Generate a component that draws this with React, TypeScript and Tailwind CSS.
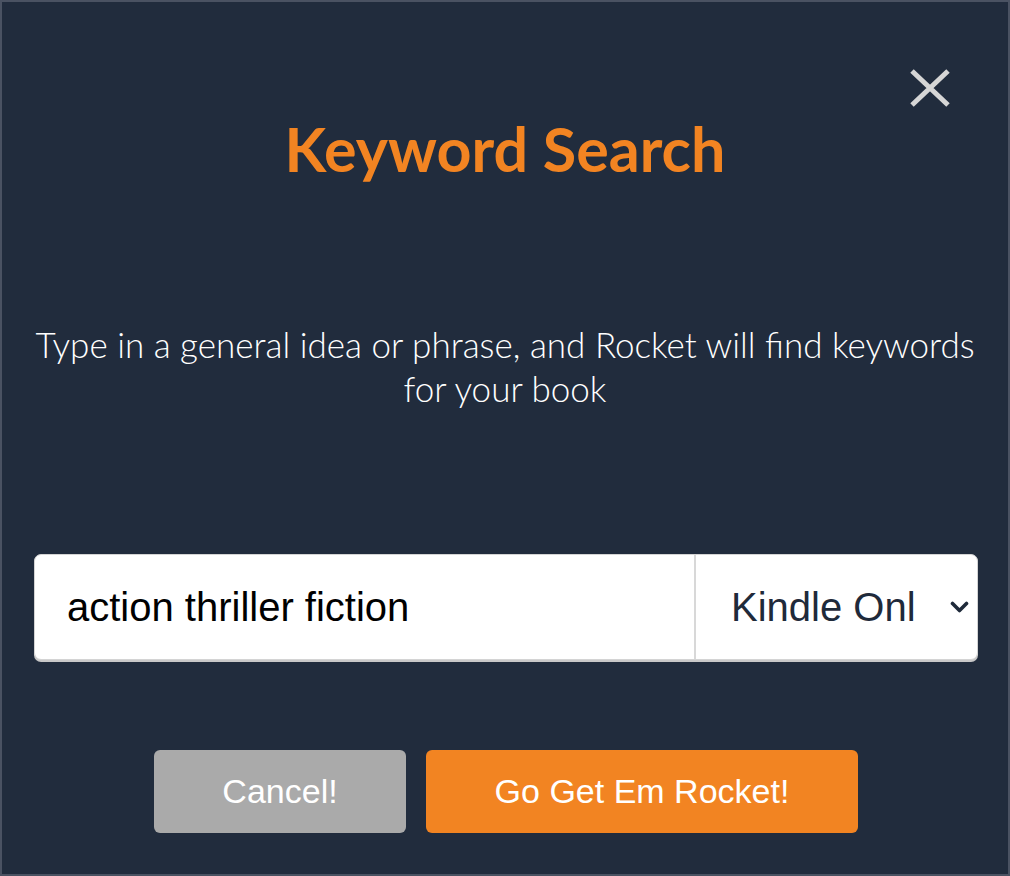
import React from "react";

export default function App() {
  return (
    <div className="w-[1010px] h-[876px] border-2 border-[#4a5262] bg-[#212c3d] relative flex flex-col items-center">
      <button className="absolute top-[64px] right-[56px] w-[44px] h-[44px] flex items-center justify-center" aria-label="Close">
        <svg width="42" height="38" viewBox="0 0 42 38">
          <path d="M3 2 L39 36 M39 2 L3 36" stroke="#d6d6d6" strokeWidth="5" strokeLinecap="butt" />
        </svg>
      </button>
      <h1
        className="mt-[107px] text-[61px] leading-[80px] font-bold text-[#f28422]"
        style={{ fontFamily: "Lato, 'Open Sans', sans-serif" }}
      >
        Keyword Search
      </h1>
      <p
        className="mt-[133px] text-[35px] leading-[44px] font-light text-white text-center w-[960px]"
        style={{ fontFamily: "Lato, 'Open Sans', sans-serif" }}
      >
        Type in a general idea or phrase, and Rocket will find keywords for your book
      </p>
      <div className="mt-[144px] w-[944px] h-[106px] self-start ml-[32px] flex bg-white rounded-[7px] border border-[#d4d4d4] shadow-[0_2px_0_#c8c8c8] overflow-hidden">
        <div className="flex-1 flex items-center pl-[32px]">
          <span className="text-[40px] text-black" style={{ fontFamily: "'Liberation Sans', Arial, sans-serif" }}>
            action thriller fiction
          </span>
        </div>
        <div className="w-[283px] border-l-2 border-[#d8d8d8] flex items-center pl-[35px] relative">
          <span className="text-[40px] text-[#1f2a3a] whitespace-nowrap" style={{ fontFamily: "'Liberation Sans', Arial, sans-serif" }}>
            Kindle Onl
          </span>
          <svg className="absolute right-[8px] top-[46px]" width="19" height="12" viewBox="0 0 19 12">
            <path d="M2.5 2.5 L9.5 9.5 L16.5 2.5" stroke="#1f2a3a" strokeWidth="3.6" fill="none" strokeLinecap="round" strokeLinejoin="round" />
          </svg>
        </div>
      </div>
      <div className="mt-[90px] ml-[2px] flex gap-[20px]">
        <button
          className="w-[252px] h-[83px] rounded-[6px] bg-[#aaaaaa] text-white text-[34px]"
          style={{ fontFamily: "'Liberation Sans', Arial, sans-serif" }}
        >
          Cancel!
        </button>
        <button
          className="w-[432px] h-[83px] rounded-[6px] bg-[#f28422] text-white text-[34px]"
          style={{ fontFamily: "'Liberation Sans', Arial, sans-serif" }}
        >
          Go Get Em Rocket!
        </button>
      </div>
    </div>
  );
}
